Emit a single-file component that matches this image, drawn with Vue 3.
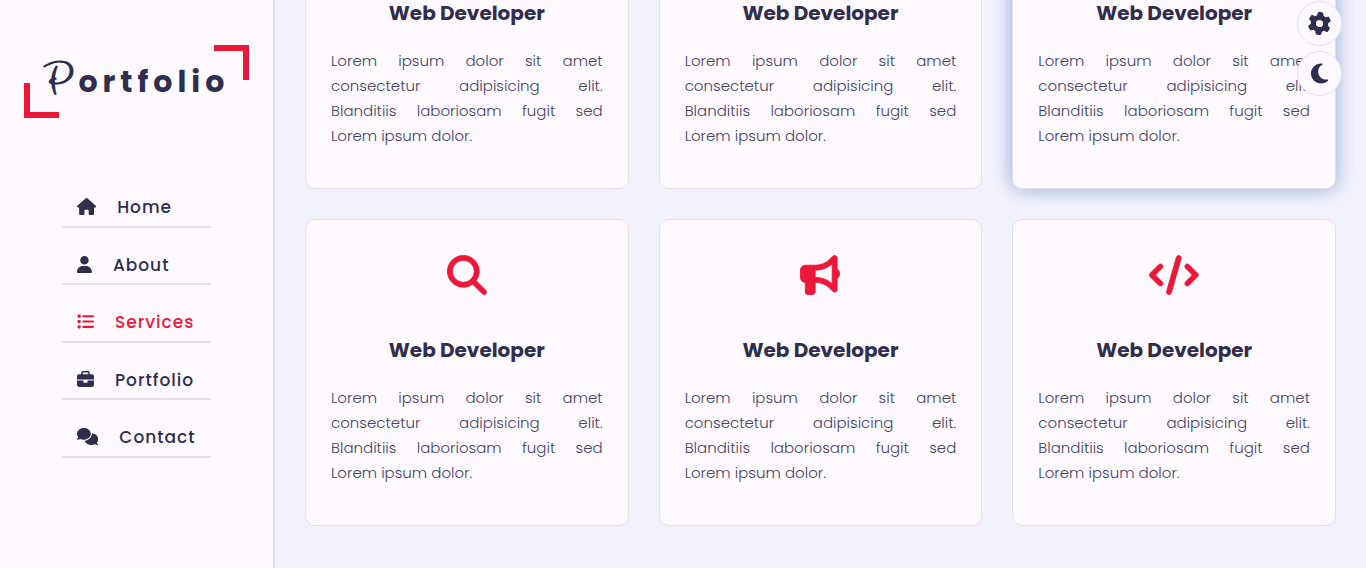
<script setup>
import { ref } from 'vue'

const icons = {
  house: { w: 576, d: 'M575.8 255.5c0 18-15 32.1-32 32.1h-32l.7 160.2c0 2.7-.2 5.4-.5 8.1V472c0 22.1-17.9 40-40 40H456c-1.1 0-2.2 0-3.3-.1c-1.4 .1-2.8 .1-4.2 .1H416 392c-22.1 0-40-17.9-40-40V448 384c0-17.7-14.3-32-32-32H256c-17.7 0-32 14.3-32 32v64 24c0 22.1-17.9 40-40 40H160 128.1c-1.5 0-3-.1-4.5-.2c-1.2 .1-2.4 .2-3.6 .2H104c-22.1 0-40-17.9-40-40V360c0-.9 0-1.9 .1-2.8V287.6H32c-18 0-32-14-32-32.1c0-9 3-17 10-24L266.4 8c7-7 15-8 22-8s15 2 21 7L564.8 231.5c8 7 12 15 11 24z' },
  user: { w: 448, d: 'M224 256A128 128 0 1 0 224 0a128 128 0 1 0 0 256zm-45.7 48C79.8 304 0 383.8 0 482.3C0 498.7 13.3 512 29.7 512H418.3c16.4 0 29.7-13.3 29.7-29.7C448 383.8 368.2 304 269.7 304H178.3z' },
  list: { w: 512, d: 'M40 48C26.7 48 16 58.7 16 72v48c0 13.3 10.7 24 24 24H88c13.3 0 24-10.7 24-24V72c0-13.3-10.7-24-24-24H40zM192 64c-17.7 0-32 14.3-32 32s14.3 32 32 32H480c17.7 0 32-14.3 32-32s-14.3-32-32-32H192zm0 160c-17.7 0-32 14.3-32 32s14.3 32 32 32H480c17.7 0 32-14.3 32-32s-14.3-32-32-32H192zm0 160c-17.7 0-32 14.3-32 32s14.3 32 32 32H480c17.7 0 32-14.3 32-32s-14.3-32-32-32H192zM16 232v48c0 13.3 10.7 24 24 24H88c13.3 0 24-10.7 24-24V232c0-13.3-10.7-24-24-24H40c-13.3 0-24 10.7-24 24zM40 368c-13.3 0-24 10.7-24 24v48c0 13.3 10.7 24 24 24H88c13.3 0 24-10.7 24-24V392c0-13.3-10.7-24-24-24H40z' },
  briefcase: { w: 512, d: 'M184 48H328c4.4 0 8 3.6 8 8V96H176V56c0-4.4 3.6-8 8-8zm-56 8V96H64C28.7 96 0 124.7 0 160v96H192 320 512V160c0-35.3-28.7-64-64-64H384V56c0-30.9-25.1-56-56-56H184c-30.9 0-56 25.1-56 56zM512 288H320v32c0 17.7-14.3 32-32 32H224c-17.7 0-32-14.3-32-32V288H0V416c0 35.3 28.7 64 64 64H448c35.3 0 64-28.7 64-64V288z' },
  comments: { w: 640, d: 'M208 352c114.9 0 208-78.8 208-176S322.9 0 208 0S0 78.8 0 176c0 38.6 14.7 74.3 39.6 103.4c-3.5 9.4-8.7 17.7-14.2 24.7c-4.8 6.2-9.7 11-13.3 14.3c-1.8 1.6-3.3 2.9-4.3 3.7c-.5 .4-.9 .7-1.1 .8l-.2 .2C1 327.2-1.4 334.4 .8 340.9S9.1 352 16 352c21.8 0 43.8-5.6 62.1-12.5c9.2-3.5 17.8-7.4 25.3-11.4C134.1 343.3 169.8 352 208 352zM448 176c0 112.3-99.1 196.9-216.5 207C255.8 457.4 336.4 512 432 512c38.2 0 73.9-8.7 104.7-23.9c7.5 4 16 7.9 25.2 11.4c18.3 6.9 40.3 12.5 62.1 12.5c6.9 0 13.1-4.5 15.2-11.1c2.1-6.6-.2-13.8-5.8-17.9l-.2-.2c-.2-.2-.6-.4-1.1-.8c-1-.8-2.5-2-4.3-3.7c-3.6-3.3-8.5-8.1-13.3-14.3c-5.5-7-10.7-15.4-14.2-24.7c24.9-29 39.6-64.7 39.6-103.4c0-92.8-84.9-168.9-192.6-175.5c.4 5.1 .6 10.3 .6 15.5z' },
  search: { w: 512, d: 'M416 208c0 45.9-14.9 88.3-40 122.7L502.6 457.4c12.5 12.5 12.5 32.8 0 45.3s-32.8 12.5-45.3 0L330.7 376c-34.4 25.2-76.8 40-122.7 40C93.1 416 0 322.9 0 208S93.1 0 208 0S416 93.1 416 208zM208 352a144 144 0 1 0 0-288 144 144 0 1 0 0 288z' },
  bullhorn: { w: 512, d: 'M480 32c0-12.9-7.8-24.6-19.8-29.6s-25.7-2.2-34.9 6.9L381.7 53c-48 48-113.1 75-181 75H192 160 64c-35.3 0-64 28.7-64 64v96c0 35.3 28.7 64 64 64l0 128c0 17.7 14.3 32 32 32h64c17.7 0 32-14.3 32-32V352l8.7 0c67.9 0 133 27 181 75l43.6 43.6c9.2 9.2 22.9 11.9 34.9 6.9s19.8-16.6 19.8-29.6V300.4c18.6-8.8 32-32.5 32-60.4s-13.4-51.6-32-60.4V32zm-64 76.7V240 371.3C357.2 317.8 280.5 288 200.7 288H192V192h8.7c79.8 0 156.5-29.8 215.3-83.3z' },
  code: { w: 640, d: 'M392.8 1.2c-17-4.9-34.7 5-39.6 22l-128 448c-4.9 17 5 34.7 22 39.6s34.7-5 39.6-22l128-448c4.9-17-5-34.7-22-39.6zm80.6 120.1c-12.5 12.5-12.5 32.8 0 45.3L562.7 256l-89.4 89.4c-12.5 12.5-12.5 32.8 0 45.3s32.8 12.5 45.3 0l112-112c12.5-12.5 12.5-32.8 0-45.3l-112-112c-12.5-12.5-32.8-12.5-45.3 0zm-306.7 0c-12.5-12.5-32.8-12.5-45.3 0l-112 112c-12.5 12.5-12.5 32.8 0 45.3l112 112c12.5 12.5 32.8 12.5 45.3 0s12.5-32.8 0-45.3L77.3 256l89.4-89.4c12.5-12.5 12.5-32.8 0-45.3z' },
}

const links = [
  { label: 'Home', icon: icons.house },
  { label: 'About', icon: icons.user },
  { label: 'Services', icon: icons.list },
  { label: 'Portfolio', icon: icons.briefcase },
  { label: 'Contact', icon: icons.comments },
]
const active = ref('Services')

const services = [
  { icon: icons.code },
  { icon: icons.code },
  { icon: icons.code, raised: true },
  { icon: icons.search },
  { icon: icons.bullhorn },
  { icon: icons.code },
]
const lines = [
  'Lorem ipsum dolor sit amet',
  'consectetur adipisicing elit.',
  'Blanditiis laboriosam fugit sed',
  'Lorem ipsum dolor.',
]
</script>

<template>
  <div class="page">
    <aside class="sidebar">
      <a class="logo" href="#"><span class="initial">P</span>ortfolio</a>
      <nav>
        <ul class="menu">
          <li v-for="link in links" :key="link.label">
            <a
              :href="'#' + link.label.toLowerCase()"
              :class="{ active: active === link.label }"
              @click="active = link.label"
            >
              <svg class="menu-icon" :viewBox="`0 0 ${link.icon.w} 512`" aria-hidden="true">
                <path :d="link.icon.d" />
              </svg>
              <span>{{ link.label }}</span>
            </a>
          </li>
        </ul>
      </nav>
    </aside>

    <main class="content">
      <section class="services">
        <article v-for="(s, i) in services" :key="i" class="card" :class="{ raised: s.raised }">
          <svg class="card-icon" :viewBox="`-6 -6 ${s.icon.w + 12} 524`" aria-hidden="true">
            <path :d="s.icon.d" />
          </svg>
          <h2>Web Developer</h2>
          <p><span v-for="line in lines" :key="line">{{ line + ' ' }}</span></p>
        </article>
      </section>
    </main>

    <div class="tools">
      <button type="button" aria-label="Settings">
        <svg class="gear" viewBox="0 0 512 512" aria-hidden="true">
          <path d="M495.9 166.6c3.2 8.7 .5 18.4-6.4 24.6l-43.3 39.4c1.1 8.3 1.7 16.8 1.7 25.4s-.6 17.1-1.7 25.4l43.3 39.4c6.9 6.2 9.6 15.9 6.4 24.6c-4.4 11.9-9.7 23.3-15.8 34.3l-4.7 8.1c-6.6 11-14 21.4-22.1 31.2c-5.9 7.2-15.7 9.6-24.5 6.8l-55.7-17.7c-13.4 10.3-28.2 18.9-44 25.4l-12.5 57.1c-2 9.1-9 16.3-18.2 17.8c-13.8 2.3-28 3.5-42.5 3.5s-28.7-1.2-42.5-3.5c-9.2-1.5-16.2-8.7-18.2-17.8l-12.5-57.1c-15.8-6.5-30.6-15.1-44-25.4L83.1 425.9c-8.8 2.8-18.6 .3-24.5-6.8c-8.1-9.8-15.5-20.2-22.1-31.2l-4.7-8.1c-6.1-11-11.4-22.4-15.8-34.3c-3.2-8.7-.5-18.4 6.4-24.6l43.3-39.4C64.6 273.1 64 264.6 64 256s.6-17.1 1.7-25.4L22.4 191.2c-6.9-6.2-9.6-15.9-6.4-24.6c4.4-11.9 9.7-23.3 15.8-34.3l4.7-8.1c6.6-11 14-21.4 22.1-31.2c5.9-7.2 15.7-9.6 24.5-6.8l55.7 17.7c13.4-10.3 28.2-18.9 44-25.4l12.5-57.1c2-9.1 9-16.3 18.2-17.8C227.3 1.2 241.5 0 256 0s28.7 1.2 42.5 3.5c9.2 1.5 16.2 8.7 18.2 17.8l12.5 57.1c15.8 6.5 30.6 15.1 44 25.4l55.7-17.7c8.8-2.8 18.6-.3 24.5 6.8c8.1 9.8 15.5 20.2 22.1 31.2l4.7 8.1c6.1 11 11.4 22.4 15.8 34.3zM256 336a80 80 0 1 0 0-160 80 80 0 1 0 0 160z" />
        </svg>
      </button>
      <button type="button" aria-label="Dark mode">
        <svg class="moon" viewBox="0 0 384 512" aria-hidden="true">
          <path d="M223.5 32C100 32 0 132.3 0 256S100 480 223.5 480c60.6 0 115.5-24.2 155.8-63.4c5-4.9 6.3-12.5 3.1-18.7s-10.1-9.7-17-8.5c-9.8 1.7-19.8 2.6-30.1 2.6c-96.9 0-175.5-78.8-175.5-176c0-65.8 36-123.1 89.3-153.3c6.1-3.5 9.2-10.5 7.7-17.3s-7.3-11.9-14.3-12.5c-6.3-.5-12.6-.8-19-.8z" />
        </svg>
      </button>
    </div>
  </div>
</template>

<style>
body {
  margin: 0;
  background: #f2f2fc;
}
</style>

<style scoped>
.page {
  --ink: #302e4d;
  --body: #464467;
  --accent: #ec1839;
  --surface: #fdf9ff;
  --line: #e8dfec;
  display: flex;
  height: 100vh;
  overflow: hidden;
  color: var(--ink);
  font-family: Poppins, Inter, 'Open Sans', sans-serif;
}
svg {
  display: block;
  fill: currentColor;
}
.sidebar {
  box-sizing: border-box;
  flex: 0 0 275px;
  display: flex;
  flex-direction: column;
  align-items: center;
  padding-top: 45px;
  background: var(--surface);
  border-right: 2px solid var(--line);
}
.logo {
  position: relative;
  box-sizing: border-box;
  width: 225px;
  height: 73px;
  padding-left: 20px;
  color: var(--ink);
  font-size: 30px;
  font-weight: 700;
  line-height: 73px;
  letter-spacing: 5px;
  text-decoration: none;
  white-space: nowrap;
}
.initial {
  font-family: 'Clicker Script', Lato, cursive;
  font-size: 42px;
  line-height: 1;
}
.logo::before,
.logo::after {
  content: '';
  position: absolute;
  box-sizing: border-box;
  width: 35px;
  height: 35px;
  border: 0 solid var(--accent);
}
.logo::before {
  left: 0;
  bottom: 0;
  border-width: 0 0 6px 6px;
}
.logo::after {
  top: 0;
  right: 0;
  border-width: 6px 6px 0 0;
}
.menu {
  display: flex;
  flex-direction: column;
  width: 149px;
  height: 288px;
  margin: 52px 0 0;
  padding: 0;
  list-style: none;
}
.menu li {
  flex: 1;
  display: flex;
  flex-direction: column;
  justify-content: flex-end;
  border-bottom: 2px solid var(--line);
}
.menu a {
  display: flex;
  align-items: center;
  gap: 21px;
  height: 37px;
  padding: 0 15px;
  color: var(--ink);
  font-size: 17px;
  font-weight: 500;
  letter-spacing: 1px;
  text-decoration: none;
}
.menu a.active {
  color: var(--accent);
}
.menu-icon {
  flex: none;
  height: 17px;
  margin-bottom: 1px;
}
.content {
  flex: 1;
  min-width: 0;
  display: flex;
  flex-direction: column;
  justify-content: flex-end;
  padding: 0 30px 42px;
}
.services {
  display: grid;
  grid-template-columns: repeat(3, 1fr);
  gap: 30px;
}
.card {
  display: flex;
  flex-direction: column;
  padding: 35px 25px 40px;
  background: var(--surface);
  border: 1px solid var(--line);
  border-radius: 10px;
}
.card.raised {
  box-shadow: 0 0 20px rgba(72, 127, 190, 0.6);
}
.card-icon {
  align-self: center;
  height: 40px;
  color: var(--accent);
  stroke: currentColor;
  stroke-width: 12;
}
h2 {
  margin: 43px 0 23px;
  font-size: 20px;
  font-weight: 700;
  line-height: 24px;
  text-align: center;
}
p {
  margin: 0;
  color: var(--body);
  font-size: 15px;
  font-weight: 300;
  line-height: 25px;
}
p span {
  display: block;
  text-align: justify;
  text-align-last: justify;
}
p span:last-child {
  text-align-last: left;
}
.tools {
  position: fixed;
  top: 1px;
  right: 24px;
  display: flex;
  flex-direction: column;
  gap: 5px;
}
.tools button {
  display: flex;
  align-items: center;
  justify-content: center;
  width: 45px;
  height: 45px;
  padding: 0;
  color: var(--ink);
  background: var(--surface);
  border: 1px solid var(--line);
  border-radius: 50%;
}
.gear {
  height: 23px;
  transform: rotate(6deg);
}
.moon {
  height: 23px;
}
</style>
